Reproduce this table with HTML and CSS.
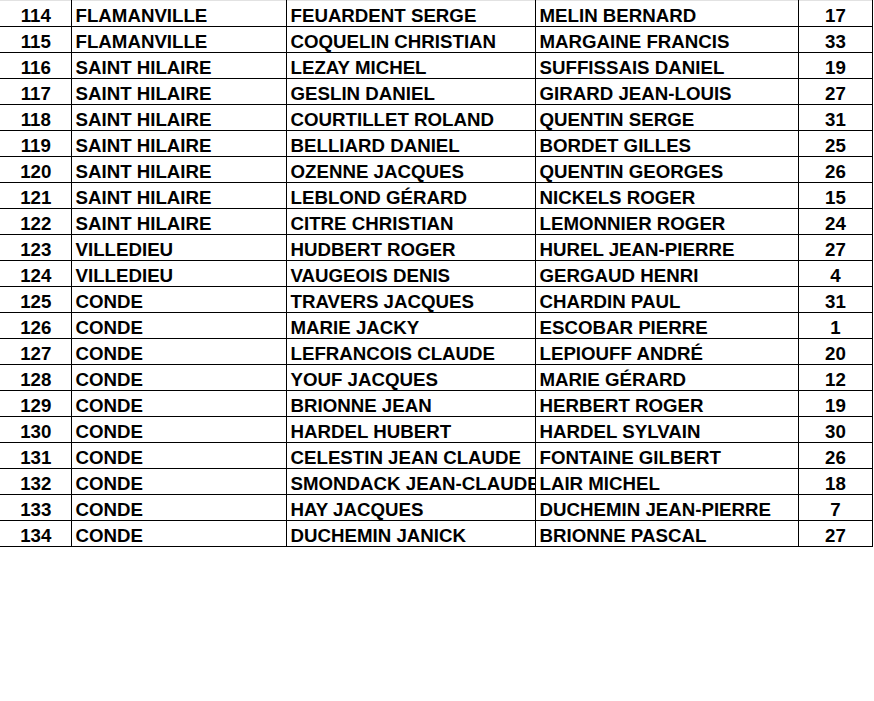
FILE: index.html
```html
<!DOCTYPE html>
<html lang="fr">
<head>
<meta charset="utf-8">
<title>Liste</title>
<link rel="stylesheet" href="styles.css">
</head>
<body>
<table class="sheet">
<colgroup>
<col class="c-num"><col class="c-club"><col class="c-a"><col class="c-b"><col class="c-pts">
</colgroup>
<tbody>
<tr><td class="num">114</td><td>FLAMANVILLE</td><td>FEUARDENT SERGE</td><td>MELIN BERNARD</td><td class="pts">17</td></tr>
<tr><td class="num">115</td><td>FLAMANVILLE</td><td>COQUELIN CHRISTIAN</td><td>MARGAINE FRANCIS</td><td class="pts">33</td></tr>
<tr><td class="num">116</td><td>SAINT HILAIRE</td><td>LEZAY MICHEL</td><td>SUFFISSAIS DANIEL</td><td class="pts">19</td></tr>
<tr><td class="num">117</td><td>SAINT HILAIRE</td><td>GESLIN DANIEL</td><td>GIRARD JEAN-LOUIS</td><td class="pts">27</td></tr>
<tr><td class="num">118</td><td>SAINT HILAIRE</td><td>COURTILLET ROLAND</td><td>QUENTIN SERGE</td><td class="pts">31</td></tr>
<tr><td class="num">119</td><td>SAINT HILAIRE</td><td>BELLIARD DANIEL</td><td>BORDET GILLES</td><td class="pts">25</td></tr>
<tr><td class="num">120</td><td>SAINT HILAIRE</td><td>OZENNE JACQUES</td><td>QUENTIN GEORGES</td><td class="pts">26</td></tr>
<tr><td class="num">121</td><td>SAINT HILAIRE</td><td>LEBLOND GÉRARD</td><td>NICKELS ROGER</td><td class="pts">15</td></tr>
<tr><td class="num">122</td><td>SAINT HILAIRE</td><td>CITRE CHRISTIAN</td><td>LEMONNIER ROGER</td><td class="pts">24</td></tr>
<tr><td class="num">123</td><td>VILLEDIEU</td><td>HUDBERT ROGER</td><td>HUREL JEAN-PIERRE</td><td class="pts">27</td></tr>
<tr><td class="num">124</td><td>VILLEDIEU</td><td>VAUGEOIS DENIS</td><td>GERGAUD HENRI</td><td class="pts">4</td></tr>
<tr><td class="num">125</td><td>CONDE</td><td>TRAVERS JACQUES</td><td>CHARDIN PAUL</td><td class="pts">31</td></tr>
<tr><td class="num">126</td><td>CONDE</td><td>MARIE JACKY</td><td>ESCOBAR PIERRE</td><td class="pts">1</td></tr>
<tr><td class="num">127</td><td>CONDE</td><td>LEFRANCOIS CLAUDE</td><td>LEPIOUFF ANDRÉ</td><td class="pts">20</td></tr>
<tr><td class="num">128</td><td>CONDE</td><td>YOUF JACQUES</td><td>MARIE GÉRARD</td><td class="pts">12</td></tr>
<tr><td class="num">129</td><td>CONDE</td><td>BRIONNE JEAN</td><td>HERBERT ROGER</td><td class="pts">19</td></tr>
<tr><td class="num">130</td><td>CONDE</td><td>HARDEL HUBERT</td><td>HARDEL SYLVAIN</td><td class="pts">30</td></tr>
<tr><td class="num">131</td><td>CONDE</td><td>CELESTIN JEAN CLAUDE</td><td>FONTAINE GILBERT</td><td class="pts">26</td></tr>
<tr><td class="num">132</td><td>CONDE</td><td>SMONDACK JEAN-CLAUDE</td><td>LAIR MICHEL</td><td class="pts">18</td></tr>
<tr><td class="num">133</td><td>CONDE</td><td>HAY JACQUES</td><td>DUCHEMIN JEAN-PIERRE</td><td class="pts">7</td></tr>
<tr><td class="num">134</td><td>CONDE</td><td>DUCHEMIN JANICK</td><td>BRIONNE PASCAL</td><td class="pts">27</td></tr>
</tbody>
</table>
</body>
</html>
```
FILE: styles.css
```css
html, body {
  margin: 0;
  padding: 0;
  background: #ffffff;
}
.sheet {
  border-collapse: collapse;
  table-layout: fixed;
  width: 872px;
  font-family: "Liberation Sans", Arial, sans-serif;
  font-weight: bold;
  font-size: 18.7px;
  color: #000;
}
.c-num { width: 71px; }
.c-club { width: 215px; }
.c-a { width: 249px; }
.c-b { width: 263px; }
.c-pts { width: 74px; }
.sheet td {
  height: 25px;
  padding: 0 3px 0 4px;
  line-height: 21px;
  vertical-align: bottom;
  white-space: nowrap;
  overflow: hidden;
  border: 1px solid #000;
  border-top: none;
}
.sheet tr:first-child td {
  border-top: 1px solid #e2e2e2;
}
.sheet td:first-child {
  border-left: none;
}
.sheet td.num,
.sheet td.pts {
  text-align: center;
}
```
